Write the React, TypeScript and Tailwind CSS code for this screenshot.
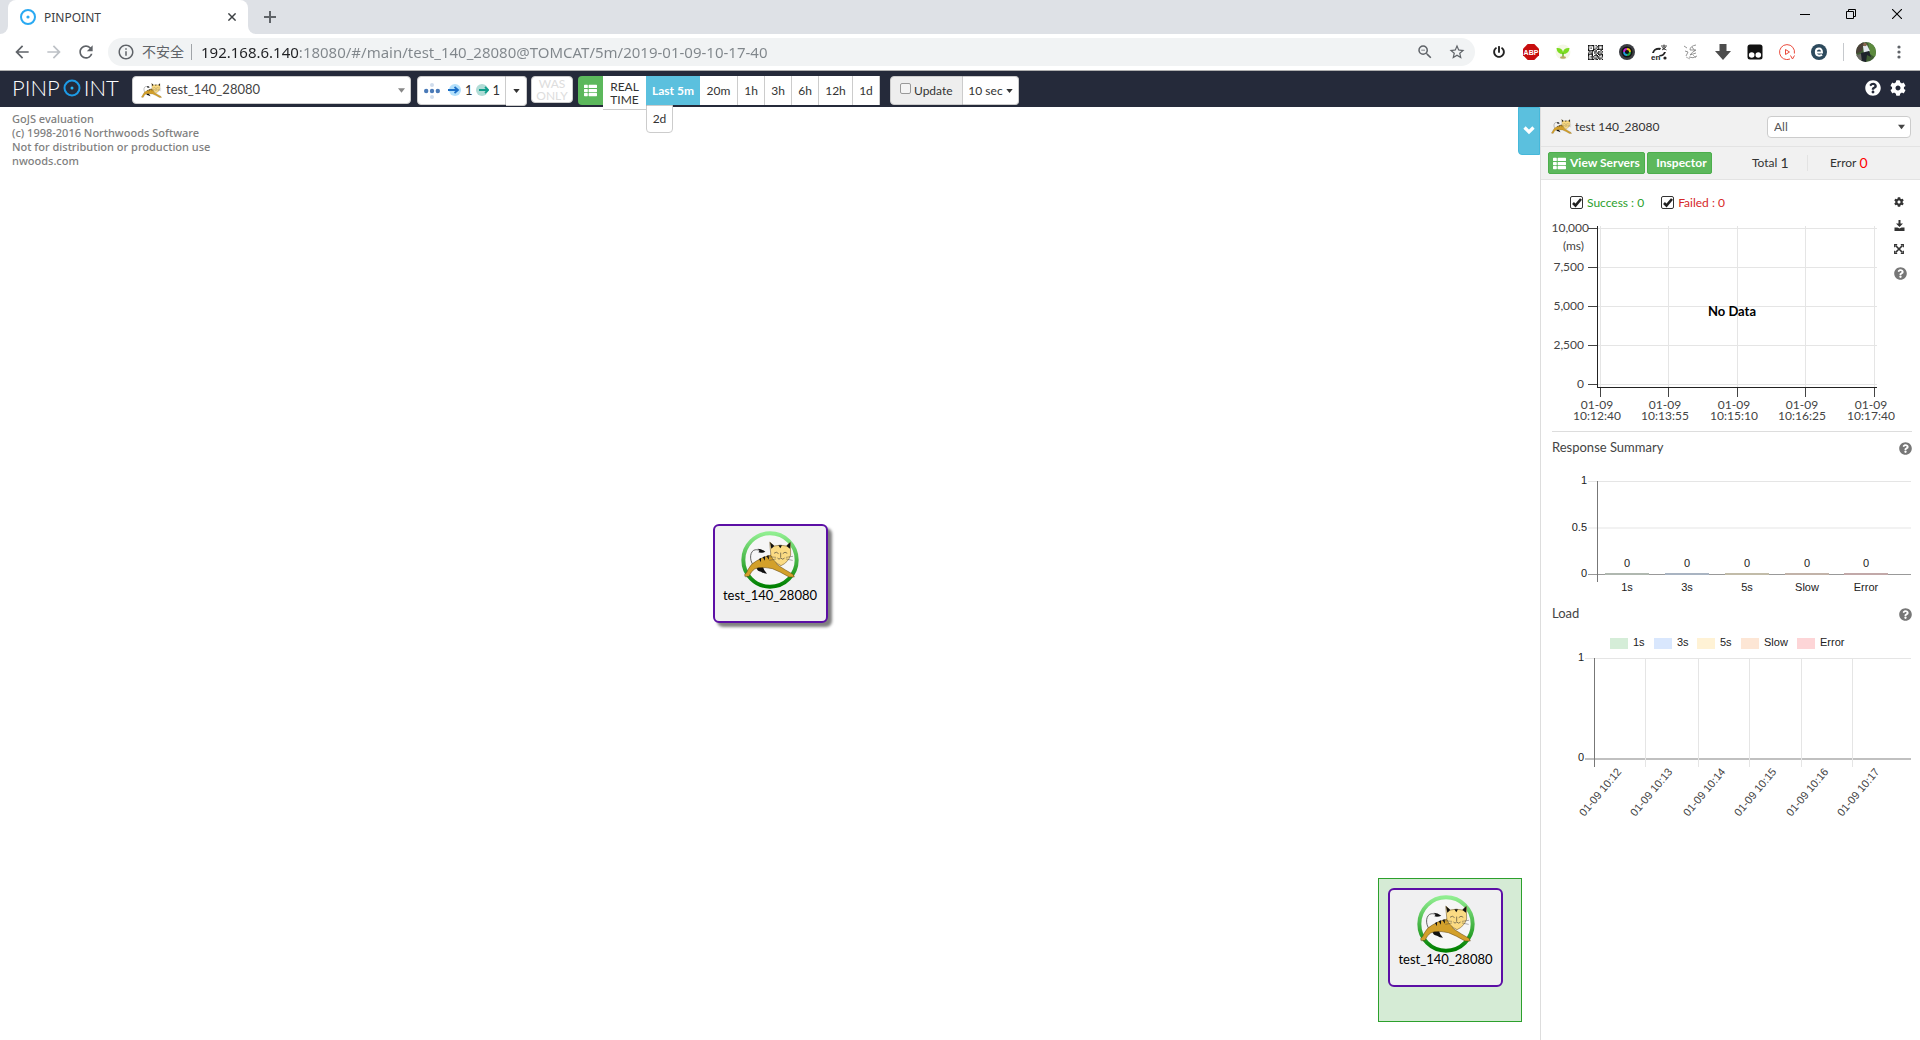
import React, { useState } from "react";
import { FaCog, FaQuestionCircle, FaThList, FaPowerOff } from "react-icons/fa";
import { MdArrowBack, MdArrowForward, MdRefresh, MdInfoOutline, MdStarBorder, MdZoomOut } from "react-icons/md";

/* ---------- Tomcat artwork ---------- */

function CatShapes() {
  return (
    <g strokeLinejoin="round" strokeLinecap="round">
      <path d="M42 108 C26 96 24 66 38 58 C44 55 50 56 56 58" fill="none" stroke="#444" strokeWidth="2.5" />
      <path d="M50 53 Q62 53 73 62 Q62 67 52 64 L56 59 Z" fill="#111" />
      <path d="M46 108 Q48 122 60 122 Q68 128 78 128 Q68 118 66 108 Z" fill="#111" />
      <path
        d="M12 136 L11 131 Q18 126 22 114 Q30 98 46 90 Q64 78 90 72 L110 102 Q134 118 156 130 L160 138 L144 138 Q118 122 94 113 Q72 108 52 110 Q40 112 32 122 L24 136 Z"
        fill="#d3a02a"
        stroke="#5b4310"
        strokeWidth="1.5"
      />
      <path d="M54 84 l6 10 l0 -13 Z M65 79 l7 10 l0 -13 Z M76 75 l8 11 l-1 -13 Z" fill="#111" />
      <path d="M87 34 L100 45 Q118 40 136 45 L148 34 L149 72 Q142 94 120 104 Q98 94 90 74 Z" fill="#fbdb83" stroke="#5b4310" strokeWidth="1.5" />
      <path d="M87 34 L100 45 L91 53 Z M148 34 L136 45 L147 53 Z M112 43 L118 52 L123 43 Z" fill="#111" />
      <path
        d="M100 66 Q106 60 112 67 M126 67 Q132 60 138 66 M119 66 L119 78 M110 82 Q114 88 119 81 Q125 88 130 82"
        fill="none"
        stroke="#333"
        strokeWidth="1.8"
      />
      <path d="M84 77 L104 79 M86 88 L104 84 M136 79 L155 76 M136 84 L154 88" fill="none" stroke="#444" strokeWidth="1.3" />
    </g>
  );
}

function SmallCat() {
  return (
    <svg viewBox="8 30 154 112" className="h-[15px] w-[21px] shrink-0" aria-hidden="true">
      <CatShapes />
    </svg>
  );
}

function RingCat({ id }: { id: string }) {
  return (
    <svg viewBox="0 0 174 174" className="size-[58px] shrink-0" aria-hidden="true">
      <defs>
        <linearGradient id={id} x1="0" y1="0" x2="0" y2="1">
          <stop offset="0" stopColor="#90ee90" />
          <stop offset="1" stopColor="#008000" />
        </linearGradient>
      </defs>
      <circle cx="87" cy="87" r="80" fill="#f6f6f6" stroke={`url(#${id})`} strokeWidth="12" />
      <CatShapes />
    </svg>
  );
}

function AppNode({ id, shadow }: { id: string; shadow?: boolean }) {
  return (
    <div
      className={
        "flex h-[99px] w-[115px] flex-col items-center rounded-md border-2 border-[#5c0fa5] bg-[#f0f0f1] pt-[5px] " +
        (shadow ? "shadow-[4px_4px_3px_#808080]" : "")
      }
    >
      <RingCat id={id} />
      <span className="-mt-1 text-[13px] leading-5 whitespace-nowrap text-black">test_140_28080</span>
    </div>
  );
}

/* ---------- Browser frame ---------- */

function Favicon() {
  return (
    <svg viewBox="0 0 16 16" className="size-4" aria-hidden="true">
      <circle cx="8" cy="8" r="7" fill="#fff" stroke="#29a9f2" strokeWidth="2" />
      <circle cx="8" cy="8" r="1.6" fill="#29a9f2" />
    </svg>
  );
}

function Cross({ size }: { size: string }) {
  return (
    <svg viewBox="0 0 10 10" className={size} aria-hidden="true">
      <path d="M.5 .5 L9.5 9.5 M9.5 .5 L.5 9.5" stroke="currentColor" strokeWidth="1.8" />
    </svg>
  );
}

function TabStrip() {
  return (
    <div className="flex h-[34px] justify-between bg-[#dee1e6] text-[#3c4043]">
      <div className="flex">
        <div className="flex w-2 items-end bg-white">
          <div className="size-full rounded-br-lg bg-[#dee1e6]" />
        </div>
        <div className="flex w-60 items-center rounded-t-lg bg-white pr-3 pl-3 text-xs" role="tab">
          <Favicon />
          <span className="ml-2 flex-1 pt-px">PINPOINT</span>
          <button aria-label="Close tab">
            <Cross size="size-[8px]" />
          </button>
        </div>
        <div className="w-2 bg-white">
          <div className="size-full rounded-bl-lg bg-[#dee1e6]" />
        </div>
        <button aria-label="New tab" className="flex w-7 items-center justify-center">
          <svg viewBox="0 0 12 12" className="size-3">
            <path d="M6 0 V12 M0 6 H12" stroke="#5f6368" strokeWidth="2" />
          </svg>
        </button>
      </div>
      <div className="flex h-7 text-black">
        <button aria-label="Minimize" className="flex w-[46px] items-center justify-center">
          <span className="h-px w-[10px] bg-black" />
        </button>
        <button aria-label="Restore" className="flex w-[46px] items-center justify-center">
          <svg viewBox="0 0 10 10" className="size-[10px]" fill="none" stroke="#000" strokeWidth="1">
            <path d="M.5 2.5 H7.5 V9.5 H.5 Z M2.5 2.5 V.5 H9.5 V7.5 H7.5" />
          </svg>
        </button>
        <button aria-label="Close window" className="flex w-[46px] items-center justify-center">
          <svg viewBox="0 0 10 10" className="size-[10px]">
            <path d="M0 0 L10 10 M10 0 L0 10" stroke="#000" strokeWidth="1.1" />
          </svg>
        </button>
      </div>
    </div>
  );
}

function QrIcon() {
  const rows = [
    "111110101111",
    "100010011001",
    "101010101001",
    "100011011111",
    "111110100010",
    "010101101101",
    "101101011010",
    "111100101111",
    "100101110101",
    "101110011001",
    "100101101110",
    "111110110101",
  ];
  return (
    <svg viewBox="0 0 12 12" className="size-[15px]">
      {rows.map((r, y) => r.split("").map((c, x) => (c === "1" ? <rect key={`${x}-${y}`} x={x} y={y} width="1" height="1" fill="#111" /> : null)))}
    </svg>
  );
}

const extensions: { name: string; icon: React.ReactNode }[] = [
  { name: "Power", icon: <FaPowerOff className="size-3 text-[#222]" /> },
  {
    name: "Adblock Plus",
    icon: (
      <svg viewBox="0 0 16 16" className="size-4">
        <path d="M4.7 0 H11.3 L16 4.7 V11.3 L11.3 16 H4.7 L0 11.3 V4.7 Z" fill="#c70d0e" />
        <text x="8" y="10.6" textAnchor="middle" fontSize="7" fontWeight="900" fill="#fff">
          ABP
        </text>
      </svg>
    ),
  },
  {
    name: "Sprout",
    icon: (
      <svg viewBox="0 0 16 16" className="size-4">
        <circle cx="8" cy="8" r="7.5" fill="#f4f7e6" />
        <path d="M8 10 Q2 10 1.500 4 Q7 3.500 8 8 Q9 3.500 14.500 4 Q14 10 8 10 Z" fill="#7bdc1f" />
        <path d="M7.300 9 H8.700 V13 H7.300 Z" fill="#5cb816" />
        <ellipse cx="8" cy="13.500" rx="3" ry="1.200" fill="#b8ab62" />
      </svg>
    ),
  },
  { name: "QR code", icon: <QrIcon /> },
  {
    name: "Camera",
    icon: (
      <svg viewBox="0 0 16 16" className="size-4">
        <circle cx="8" cy="8" r="8" fill="#3b3d42" />
        <circle cx="8" cy="8" r="5.500" fill="#111" />
        <path d="M8 5 A3 3 0 0 1 11 8" stroke="#e6c417" strokeWidth="1.800" fill="none" />
        <path d="M11 8 A3 3 0 0 1 8 11" stroke="#28a745" strokeWidth="1.800" fill="none" />
        <path d="M8 11 A3 3 0 0 1 5 8" stroke="#1d9bd8" strokeWidth="1.800" fill="none" />
        <path d="M5 8 A3 3 0 0 1 8 5" stroke="#c326c9" strokeWidth="1.800" fill="none" />
      </svg>
    ),
  },
  {
    name: "Translate",
    icon: (
      <svg viewBox="0 0 16 16" className="size-4">
        <path d="M1 9 Q3 3 10 4 L9 6 Q4 5 3 9 Z M15 8 Q13 13 8 12.500 L8.500 11 Q12 11 13 8 Z" fill="#222" />
        <path d="M10 2 H16 M13 .5 V6 M11 6 L15 3 M11 3.500 L15.500 6" stroke="#333" strokeWidth=".9" />
        <text x="0" y="15.500" fontSize="8" fontWeight="700" fill="#222">
          en
        </text>
        <circle cx="14" cy="14" r="1.600" fill="#222" />
      </svg>
    ),
  },
  {
    name: "Sketch",
    icon: (
      <svg viewBox="0 0 16 16" className="size-4" fill="none" stroke="#aaa" strokeWidth=".9">
        <path d="M1 2 L4 4 M2 7 L5 8 L3 12 M13 1 Q7 2 7 6 H13 Q9 8 7 11 L13 9 M6 13 Q10 15 14 12 M9 3 L12 7" stroke="#888" />
        <path d="M3 13 L7 15 M10 11 L13 14" />
      </svg>
    ),
  },
  {
    name: "Download",
    icon: (
      <svg viewBox="0 0 16 16" className="size-4">
        <path d="M4.500 0 H11.500 V7 H16 L8 16 L0 7 H4.500 Z" fill="#4d4d4d" />
      </svg>
    ),
  },
  {
    name: "Tampermonkey",
    icon: (
      <svg viewBox="0 0 16 16" className="size-4">
        <rect x=".5" y=".5" width="15" height="15" rx="2.500" fill="#111" />
        <circle cx="4.700" cy="11" r="2.800" fill="#fff" />
        <circle cx="11.300" cy="11" r="2.800" fill="#fff" />
      </svg>
    ),
  },
  {
    name: "Video",
    icon: (
      <svg viewBox="0 0 16 16" className="size-4" fill="none" stroke="#ea4a3c" strokeWidth="1">
        <path d="M11 15 A7.500 7.500 0 1 1 15.400 9.500" />
        <path d="M6.500 5.500 L10.500 8 L6.500 10.500 Z M11.500 11.500 L13.500 15 L15.500 11.500" />
      </svg>
    ),
  },
  {
    name: "Web engine",
    icon: (
      <svg viewBox="0 0 16 16" className="size-4">
        <circle cx="8" cy="8" r="8" fill="#2d4a5d" />
        <path d="M4.500 8.500 H11 Q11 4.500 8 4.500 Q4.800 4.500 4.800 8 Q4.800 11.700 8.200 11.700 Q10 11.700 11 10.800" fill="none" stroke="#fff" strokeWidth="1.900" />
      </svg>
    ),
  },
];

function AddressBar() {
  return (
    <div className="flex h-9 items-center bg-white">
      <div className="flex w-[108px] shrink-0 items-center gap-3 pl-3 text-[#5f6368]">
        <button aria-label="Back">
          <MdArrowBack className="size-5" />
        </button>
        <button aria-label="Forward" className="text-[#bdc1c6]">
          <MdArrowForward className="size-5" />
        </button>
        <button aria-label="Reload">
          <MdRefresh className="size-5" />
        </button>
      </div>
      <div className="flex h-7 flex-1 items-center rounded-full bg-[#f1f3f4] pr-[9px] pl-[9px] text-sm text-[#5f6368]">
        <MdInfoOutline className="size-[18px]" />
        <span className="ml-[7px]">不安全</span>
        <span className="mr-[9px] ml-[7px] h-4 w-px bg-[#a0a4a8]" />
        <input
          aria-label="Address"
          className="h-6 min-w-0 flex-1 bg-[linear-gradient(to_right,#202124_98px,#80868b_98px)] bg-clip-text text-[15px] text-transparent outline-none"
          defaultValue="192.168.6.140:18080/#/main/test_140_28080@TOMCAT/5m/2019-01-09-10-17-40"
        />
        <button aria-label="Zoom" className="mr-[14px]">
          <MdZoomOut className="size-[18px]" />
        </button>
        <button aria-label="Bookmark">
          <MdStarBorder className="size-[18px]" />
        </button>
      </div>
      <div className="flex items-center gap-4 pr-[13px] pl-4 font-['Liberation_Sans',sans-serif]">
        {extensions.map((e) => (
          <button key={e.name} aria-label={e.name} className="flex size-4 items-center justify-center">
            {e.icon}
          </button>
        ))}
        <div className="flex items-center">
          <span className="h-[18px] w-px bg-[#c6c9cd]" />
          <button aria-label="Profile" className="ml-3">
            <svg viewBox="0 0 20 20" className="size-5">
              <defs>
                <clipPath id="avatar">
                  <circle cx="10" cy="10" r="10" />
                </clipPath>
              </defs>
              <g clipPath="url(#avatar)">
                <rect width="20" height="20" fill="#3f5d33" />
                <path d="M0 0 H8 L6 9 L0 12 Z" fill="#4a4038" />
                <path d="M12 0 L20 4 V16 L14 12 Z" fill="#5c8a3e" />
                <path d="M7 4 L11 3 L14 9 L8 12 Z" fill="#e3e8ee" />
                <circle cx="9" cy="2.500" r="1.700" fill="#8a6550" />
                <path d="M5 11 L13 9 L15 15 L11 13 L10 20 H5 Z" fill="#1e222b" />
                <path d="M0 13 L5 12 L6 20 H0 Z" fill="#6c6a66" />
              </g>
            </svg>
          </button>
          <button aria-label="Menu" className="ml-[15px] flex w-4 justify-center">
            <svg viewBox="0 0 4 14" className="h-[14px] w-1" fill="#5f6368">
              <circle cx="2" cy="2" r="1.600" />
              <circle cx="2" cy="7" r="1.600" />
              <circle cx="2" cy="12" r="1.600" />
            </svg>
          </button>
        </div>
      </div>
    </div>
  );
}

/* ---------- Application toolbar ---------- */

function Caret({ className }: { className: string }) {
  return (
    <svg viewBox="0 0 8 5" className={className} aria-hidden="true">
      <path d="M0 0 H8 L4 5 Z" fill="currentColor" />
    </svg>
  );
}

function Logo() {
  return (
    <a href="#" aria-label="Pinpoint" className="flex w-[132px] items-center pl-3 text-[22px] leading-7 font-light text-white">
      <span>PINP</span>
      <svg viewBox="0 0 18 18" className="mx-[3px] size-[18px]">
        <circle cx="9" cy="9" r="7.500" fill="none" stroke="#1d9be6" strokeWidth="2" />
        <circle cx="9" cy="9" r="1.500" fill="#29b6f6" />
      </svg>
      <span>INT</span>
    </a>
  );
}

function DepthIcon() {
  return (
    <svg viewBox="0 0 16 16" className="size-4 shrink-0">
      <circle cx="8" cy="2" r="2" fill="#cfdcec" />
      <circle cx="8" cy="14" r="2" fill="#cfdcec" />
      <circle cx="2.200" cy="8" r="2.200" fill="#4a7ab8" />
      <circle cx="8" cy="8" r="2.200" fill="#4a7ab8" />
      <circle cx="13.800" cy="8" r="2.200" fill="#4a7ab8" />
    </svg>
  );
}

function InboundIcon() {
  return (
    <svg viewBox="0 0 13 12" className="h-3 w-[13px] shrink-0">
      <circle cx="7" cy="6" r="6" fill="#b3e0fb" />
      <path d="M0 6 H9 M6.500 3 L10 6 L6.500 9" fill="none" stroke="#1b6fc8" strokeWidth="1.800" />
    </svg>
  );
}

function OutboundIcon() {
  return (
    <svg viewBox="0 0 13 12" className="h-3 w-[13px] shrink-0">
      <circle cx="6" cy="6" r="6" fill="#b0dcd6" />
      <path d="M3 6 H12 M9 3 L12.300 6 L9 9" fill="none" stroke="#109e8c" strokeWidth="1.800" />
    </svg>
  );
}

const periods = [
  { label: "20m", width: "w-[38px]" },
  { label: "1h", width: "w-[27px]" },
  { label: "3h", width: "w-[27px]" },
  { label: "6h", width: "w-[27px]" },
  { label: "12h", width: "w-[34px]" },
  { label: "1d", width: "w-[27px]" },
];

function Toolbar() {
  const [update, setUpdate] = useState(false);
  return (
    <header className="relative z-10 flex h-9 items-start bg-[#252a3a] pt-[5px] text-xs text-[#333]">
      <div className="flex h-6 items-center">
        <Logo />
      </div>
      <div className="flex h-7 w-[279px] items-center rounded-sm border border-[#ccc] bg-white pl-2">
        <SmallCat />
        <select aria-label="Application" className="h-6 min-w-0 flex-1 appearance-none pl-1 text-[13px] text-[#444] outline-none">
          <option>test_140_28080</option>
        </select>
        <Caret className="pointer-events-none mr-[5px] h-[5px] w-[7px] text-[#888]" />
      </div>
      <button className="ml-[6px] flex h-[29px] w-[89px] items-center rounded-l-sm border border-[#ccc] bg-white pl-[6px] text-[13px]">
        <DepthIcon />
        <span className="ml-2 flex items-center gap-1">
          <InboundIcon />1
        </span>
        <span className="ml-[3px] flex items-center gap-1">
          <OutboundIcon />1
        </span>
      </button>
      <button aria-label="Depth options" className="flex h-[30px] w-[21px] items-center justify-center rounded-r-sm border border-l-0 border-[#ccc] bg-white">
        <Caret className="h-[4px] w-[7px]" />
      </button>
      <button className="ml-1 h-[27px] w-[42px] rounded-sm border border-[#ccc] bg-white leading-3 text-[#ddd]">
        WAS
        <br />
        ONLY
      </button>
      <button aria-label="List" className="ml-[5px] flex h-[29px] w-[25px] items-center justify-center rounded-l-sm bg-[#5cb85c] text-white">
        <FaThList className="size-[13px]" />
      </button>
      <button className="h-[34px] w-[43px] border-b border-[#ccc] bg-white leading-[13px]">
        REAL
        <br />
        TIME
      </button>
      <div className="flex flex-col">
        <button className="h-[29px] w-[54px] bg-[#5bc0de] font-bold whitespace-nowrap text-white">Last 5m</button>
        <button className="h-7 w-[27px] rounded-b-sm border border-[#ccc] bg-white">2d</button>
      </div>
      {periods.map((p) => (
        <button key={p.label} className={`${p.width} h-[29px] border-r border-[#ccc] bg-white`}>
          {p.label}
        </button>
      ))}
      <label className="ml-[10px] flex h-[29px] w-[73px] items-center gap-[3px] rounded-l-sm border border-[#ccc] bg-[#eee] pl-[9px]">
        <input
          type="checkbox"
          checked={update}
          onChange={() => setUpdate(!update)}
          className="mb-1 size-[11px] shrink-0 appearance-none rounded-xs border border-[#999] bg-[#f4f4f4] checked:bg-[#333]"
        />
        Update
      </label>
      <button className="flex h-[29px] w-[56px] items-center justify-center gap-[3px] rounded-r-sm border border-l-0 border-[#ccc] bg-white whitespace-nowrap">
        10 sec
        <Caret className="mt-px h-[4px] w-[7px]" />
      </button>
      <div className="mt-1 mr-[14px] ml-auto flex items-center gap-[9px] text-white">
        <button aria-label="Help">
          <FaQuestionCircle className="size-4" />
        </button>
        <button aria-label="Settings">
          <FaCog className="size-4" />
        </button>
      </div>
    </header>
  );
}

/* ---------- Side panel charts ---------- */

function ScatterChart() {
  const ys = [
    { y: 3, label: "10,000", x: 37 },
    { y: 42, label: "7,500", x: 32 },
    { y: 81, label: "5,000", x: 32 },
    { y: 120, label: "2,500", x: 32 },
    { y: 159, label: "0", x: 32 },
  ];
  const xs = [
    { x: 48, label: "10:12:40" },
    { x: 116, label: "10:13:55" },
    { x: 185, label: "10:15:10" },
    { x: 253, label: "10:16:25" },
    { x: 322, label: "10:17:40" },
  ];
  return (
    <svg className="block h-[198px] w-[341px] overflow-visible text-xs" role="img" aria-label="Response scatter chart">
      {ys.map((t) => (
        <g key={t.label}>
          <rect x="46" y={t.y} width="279" height="1" fill="#e5e5e5" />
          <rect x="36" y={t.y} width="9" height="1" fill="#444" />
          <text x={t.x} y={t.y + 4} textAnchor="end" fill="#444">
            {t.label}
          </text>
        </g>
      ))}
      <text x="32" y="25" textAnchor="end" fill="#444">
        (ms)
      </text>
      {xs.map((t) => (
        <g key={t.label}>
          <rect x={t.x} y="1" width="1" height="161" fill="#e5e5e5" />
          <rect x={t.x} y="162" width="1" height="10" fill="#444" />
          <text x={t.x - 3} y="184" textAnchor="middle" fill="#444">
            01-09
          </text>
          <text x={t.x - 3} y="195" textAnchor="middle" fill="#444">
            {t.label}
          </text>
        </g>
      ))}
      <rect x="45" y="1" width="1" height="162" fill="#222" />
      <rect x="45" y="162" width="280" height="1" fill="#222" />
      <text x="180" y="91" textAnchor="middle" fontSize="13" fontWeight="700" fill="#000">
        No Data
      </text>
    </svg>
  );
}

function SummaryChart() {
  const bars = [
    { x: 75, label: "1s", c: "#b0b8b0" },
    { x: 135, label: "3s", c: "#a9b4c2" },
    { x: 195, label: "5s", c: "#c2bca9" },
    { x: 255, label: "Slow", c: "#c2b3a9" },
    { x: 314, label: "Error", c: "#c2a9a9" },
  ];
  return (
    <svg className="block h-[120px] w-full font-['Liberation_Sans',sans-serif] text-[11px]" role="img" aria-label="Response summary chart">
      <rect x="36" y="7" width="323" height="1" fill="#e5e5e5" />
      <rect x="36" y="53" width="323" height="2" fill="#f2f2f2" />
      <rect x="36" y="100" width="323" height="1" fill="#999" />
      <rect x="45" y="7" width="1" height="101" fill="#777" />
      <g fill="#222" textAnchor="end">
        <text x="35" y="10">
          1
        </text>
        <text x="35" y="57">
          0.5
        </text>
        <text x="35" y="103">
          0
        </text>
      </g>
      {bars.map((b) => (
        <g key={b.label} textAnchor="middle" fill="#222">
          <rect x={b.x - 22} y="99" width="44" height="2" fill={b.c} />
          <text x={b.x} y="93">
            0
          </text>
          <text x={b.x} y="117">
            {b.label}
          </text>
        </g>
      ))}
    </svg>
  );
}

function LoadChart() {
  const legend = [
    { x: 58, label: "1s", c: "#d5edd8" },
    { x: 102, label: "3s", c: "#d9e7fd" },
    { x: 145, label: "5s", c: "#fff2d5" },
    { x: 189, label: "Slow", c: "#fde6d5" },
    { x: 245, label: "Error", c: "#fdd5d7" },
  ];
  const ticks = [42, 93, 146, 197, 249, 300];
  return (
    <svg className="block h-[200px] w-full font-['Liberation_Sans',sans-serif] text-[11px]" role="img" aria-label="Load chart">
      {legend.map((l) => (
        <g key={l.label} fill="#222">
          <rect x={l.x} y="9" width="18" height="11" fill={l.c} />
          <text x={l.x + 23} y="17">
            {l.label}
          </text>
        </g>
      ))}
      <rect x="33" y="29" width="326" height="1" fill="#e5e5e5" />
      <rect x="33" y="129" width="326" height="2" fill="#c0c0c0" />
      <g fill="#222" textAnchor="end">
        <text x="32" y="32">
          1
        </text>
        <text x="32" y="132">
          0
        </text>
      </g>
      {ticks.map((x, i) => (
        <g key={x}>
          <rect x={x} y="29" width="1" height="109" fill={i === 0 ? "#777" : "#e5e5e5"} />
          <text x="0" y="0" transform={`translate(${x + 28} 143) rotate(-50)`} textAnchor="end" fill="#444">
            {`01-09 10:1${i + 2}`}
          </text>
        </g>
      ))}
    </svg>
  );
}

function ResultCheck({ label, color }: { label: string; color: string }) {
  return (
    <label className={`flex items-center gap-1 ${color}`}>
      <span className="grid size-[13px]">
        <input type="checkbox" defaultChecked className="peer col-start-1 row-start-1 size-[13px] appearance-none rounded-xs border border-[#333] bg-white" />
        <svg viewBox="0 0 13 13" className="pointer-events-none invisible col-start-1 row-start-1 size-[13px] peer-checked:visible">
          <path d="M3 7 L5.500 9.500 L11 3" fill="none" stroke="#222" strokeWidth="2.600" />
        </svg>
      </span>
      {label}
    </label>
  );
}

function SaveIcon() {
  return (
    <svg viewBox="0 0 11 11" className="size-[11px]" fill="currentColor">
      <path d="M4.500 0 H6.500 V3.500 H9 L5.500 7 L2 3.500 H4.500 Z M.5 7.500 H3.500 L5.500 8.500 L7.500 7.500 H10.500 V11 H.5 Z" />
    </svg>
  );
}

function ExpandIcon() {
  return (
    <svg viewBox="0 0 10 10" className="size-[10px]" fill="none" stroke="currentColor">
      <path d="M1.500 1.500 L8.500 8.500 M8.500 1.500 L1.500 8.500" strokeWidth="1.700" />
      <path d="M.6 3.200 V.6 H3.200 M6.800 .6 H9.400 V3.200 M9.400 6.800 V9.400 H6.800 M3.200 9.400 H.6 V6.800" strokeWidth="1.100" />
    </svg>
  );
}

function SectionTitle({ title }: { title: string }) {
  return (
    <div className="flex h-5 items-center justify-between text-[13px] text-[#444]">
      <h2>{title}</h2>
      <button aria-label={`${title} help`} className="text-[#777]">
        <FaQuestionCircle className="size-[13px]" />
      </button>
    </div>
  );
}

function SidePanel() {
  return (
    <aside className="w-[380px] shrink-0 border-l border-[#ddd] bg-white text-[13px] text-[#333]">
      <div className="flex h-10 items-center border-b border-[#e3e3e3] bg-[#f1f1f1] pr-[9px] pl-[10px]">
        <SmallCat />
        <span className="ml-[3px] flex-1 text-xs">test 140_28080</span>
        <div className="flex h-[22px] w-[144px] items-center rounded-sm border border-[#ccc] bg-white pr-[5px]">
          <select aria-label="Agent" className="h-5 min-w-0 flex-1 appearance-none pl-[6px] text-xs text-[#555] outline-none">
            <option>All</option>
          </select>
          <Caret className="pointer-events-none h-[6px] w-[7px] text-[#444]" />
        </div>
      </div>
      <div className="flex h-[33px] items-center border-b border-[#e3e3e3] bg-[#f1f1f1] pl-[7px] text-xs">
        <button className="flex h-[22px] w-[97px] items-center gap-1 rounded-xs border border-[#4cae4c] bg-[#5cb85c] pl-1 font-bold whitespace-nowrap text-white">
          <FaThList className="size-[13px]" />
          View Servers
        </button>
        <button className="ml-[2px] h-[22px] w-[65px] rounded-xs border border-[#4cae4c] bg-[#5cb85c] pl-1 font-bold text-white">Inspector</button>
        <span className="ml-10 flex h-4 w-[56px] items-center gap-[3px] border-r border-[#e3e3e3]">
          Total <span className="text-sm">1</span>
        </span>
        <span className="ml-[22px] flex h-4 items-center gap-[3px]">
          Error <span className="text-sm text-[#f00]">0</span>
        </span>
      </div>
      <section className="mr-[8px] ml-[11px] flex border-b border-[#ddd]">
        <div className="flex-1">
          <div className="flex h-[45px] items-center gap-[17px] pl-[18px] text-xs">
            <ResultCheck label="Success : 0" color="text-[#2ca02c]" />
            <ResultCheck label="Failed : 0" color="text-[#d62728]" />
          </div>
          <ScatterChart />
          <div className="h-2" />
        </div>
        <div className="flex w-[18px] flex-col items-start gap-[13px] pt-[17px]">
          <button aria-label="Chart settings">
            <FaCog className="size-[10px]" />
          </button>
          <button aria-label="Download chart">
            <SaveIcon />
          </button>
          <button aria-label="Expand chart">
            <ExpandIcon />
          </button>
          <button aria-label="Chart help" className="text-[#777]">
            <FaQuestionCircle className="size-[13px]" />
          </button>
        </div>
      </section>
      <section className="mr-[8px] ml-[11px] pt-[6px]">
        <SectionTitle title="Response Summary" />
        <div className="h-4" />
        <SummaryChart />
      </section>
      <section className="mr-[8px] ml-[11px] pt-[10px]">
        <SectionTitle title="Load" />
        <div className="h-[5px]" />
        <LoadChart />
      </section>
    </aside>
  );
}

/* ---------- Server map ---------- */

function ServerMap() {
  return (
    <main className="relative flex flex-1 items-center justify-center bg-white">
      <p className="absolute top-[5px] left-3 font-['Noto_Sans',sans-serif] text-[11px] leading-[14px] font-medium text-[#808080]">
        GoJS evaluation
        <br />
        (c) 1998-2016 Northwoods Software
        <br />
        Not for distribution or production use
        <br />
        nwoods.com
      </p>
      <AppNode id="ring-main" shadow />
      <button
        aria-label="Toggle panel"
        className="absolute top-0 right-0 flex h-12 w-[22px] items-center justify-center rounded-bl-sm border border-[#46b8da] bg-[#5bc0de] text-white"
      >
        <svg viewBox="0 0 12 9" className="mt-[-2px] h-[9px] w-3">
          <path d="M1.500 1.500 L6 6 L10.500 1.500" fill="none" stroke="currentColor" strokeWidth="3.200" />
        </svg>
      </button>
      <div className="absolute right-[18px] bottom-[18px] size-[144px] border border-[#2ca02c] bg-[#d5ebd5] pt-[9px] pl-[9px]">
        <AppNode id="ring-overview" />
      </div>
    </main>
  );
}

export default function App() {
  return (
    <div className="flex min-h-screen flex-col overflow-hidden bg-white font-['Lato',sans-serif]">
      <div className="border-b border-[#b0b0b0] font-['Noto_Sans','Noto_Sans_CJK_SC',sans-serif]">
        <TabStrip />
        <AddressBar />
      </div>
      <Toolbar />
      <div className="flex flex-1">
        <ServerMap />
        <SidePanel />
      </div>
    </div>
  );
}
